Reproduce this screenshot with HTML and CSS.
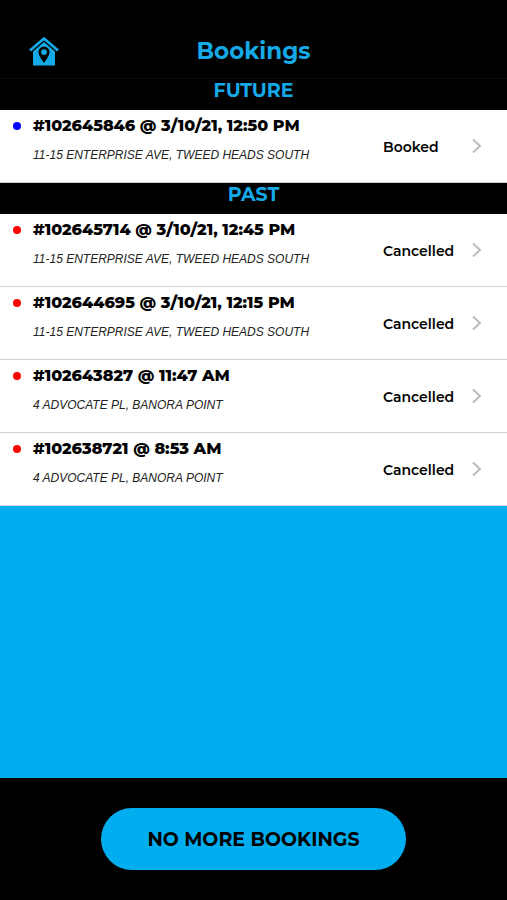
FILE: index.html
```html
<!DOCTYPE html>
<html lang="en">
<head>
<meta charset="utf-8">
<meta name="viewport" content="width=device-width, initial-scale=1">
<title>Bookings</title>
<link rel="stylesheet" href="styles.css">
</head>
<body>
<header class="top">
  <a class="home" href="#" aria-label="Home">
    <svg viewBox="0 0 30 30" width="30" height="30" aria-hidden="true">
      <path d="M4 15.500 15 6l11 9.500V29.500H4z" fill="#16a9e8"/>
      <path d="M1 14.500 15 2.500l14 12" fill="none" stroke="#16a9e8" stroke-width="2.800"/>
      <path fill="#000" fill-rule="evenodd" d="M15 10.500a5.600 5.600 0 0 0-5.600 5.600c0 4 5.600 10.900 5.600 10.900s5.600-6.900 5.600-10.900a5.600 5.600 0 0 0-5.600-5.600zm0 2.700a2.900 2.900 0 1 1 0 5.800 2.900 2.900 0 0 1 0-5.800z"/>
    </svg>
  </a>
  <h1 class="title">Bookings</h1>
</header>
<main class="content">
  <section>
    <h2 class="heading">FUTURE</h2>
    <ul class="list">
      <li><a class="row" href="#"><span class="dot booked"></span><span class="details"><strong class="ref">#102645846 @ 3/10/21, 12:50 PM</strong><em class="address">11-15 ENTERPRISE AVE, TWEED HEADS SOUTH</em></span><span class="status">Booked</span><svg class="chevron" viewBox="0 0 10 16" aria-hidden="true"><path d="m1 1.500 7 6.500-7 6.500"/></svg></a></li>
    </ul>
  </section>
  <section>
    <h2 class="heading">PAST</h2>
    <ul class="list">
      <li><a class="row" href="#"><span class="dot"></span><span class="details"><strong class="ref">#102645714 @ 3/10/21, 12:45 PM</strong><em class="address">11-15 ENTERPRISE AVE, TWEED HEADS SOUTH</em></span><span class="status">Cancelled</span><svg class="chevron" viewBox="0 0 10 16" aria-hidden="true"><path d="m1 1.500 7 6.500-7 6.500"/></svg></a></li>
      <li><a class="row" href="#"><span class="dot"></span><span class="details"><strong class="ref">#102644695 @ 3/10/21, 12:15 PM</strong><em class="address">11-15 ENTERPRISE AVE, TWEED HEADS SOUTH</em></span><span class="status">Cancelled</span><svg class="chevron" viewBox="0 0 10 16" aria-hidden="true"><path d="m1 1.500 7 6.500-7 6.500"/></svg></a></li>
      <li><a class="row" href="#"><span class="dot"></span><span class="details"><strong class="ref">#102643827 @ 11:47 AM</strong><em class="address">4 ADVOCATE PL, BANORA POINT</em></span><span class="status">Cancelled</span><svg class="chevron" viewBox="0 0 10 16" aria-hidden="true"><path d="m1 1.500 7 6.500-7 6.500"/></svg></a></li>
      <li><a class="row" href="#"><span class="dot"></span><span class="details"><strong class="ref">#102638721 @ 8:53 AM</strong><em class="address">4 ADVOCATE PL, BANORA POINT</em></span><span class="status">Cancelled</span><svg class="chevron" viewBox="0 0 10 16" aria-hidden="true"><path d="m1 1.500 7 6.500-7 6.500"/></svg></a></li>
    </ul>
  </section>
</main>
<footer class="bottom">
  <button class="more" type="button">NO MORE BOOKINGS</button>
</footer>
</body>
</html>
```
FILE: styles.css
```css
* {
  box-sizing: border-box;
}

body {
  display: flex;
  flex-direction: column;
  min-height: 100vh;
  margin: 0;
  background: #00aeef;
  color: #000;
  font-family: Montserrat, Inter, sans-serif;
}

.top {
  display: grid;
  grid-template-columns: 30px 1fr 30px;
  align-items: center;
  padding: 32px 29px 8px;
  border-bottom: 1px solid #0a0a0a;
  background: #000;
}

.home {
  display: block;
  height: 30px;
}

.title {
  margin: 0;
  color: #16a9e8;
  font-size: 23px;
  font-weight: 700;
  line-height: 38px;
  text-align: center;
}

.content {
  flex: 1;
}

.heading {
  margin: 0;
  padding-bottom: 7px;
  background: #000;
  color: #16a9e8;
  font-size: 19px;
  font-weight: 700;
  line-height: 24px;
  text-align: center;
}

.list {
  margin: 0;
  padding: 0;
  list-style: none;
}

.row {
  display: flex;
  align-items: center;
  min-height: 73px;
  padding: 0 25px 0 13px;
  border-bottom: 1px solid #d2d2d2;
  background: #fff;
  color: #000;
  text-decoration: none;
}

.dot {
  flex: none;
  align-self: flex-start;
  width: 8px;
  height: 8px;
  margin: 12px 12px 0 0;
  border-radius: 50%;
  background: #f00;
}

.booked {
  background: #00f;
}

.details {
  flex: 1;
  display: flex;
  flex-direction: column;
  gap: 8px;
  align-self: flex-start;
  padding-top: 4px;
}

.ref {
  font-size: 16px;
  font-weight: 800;
  line-height: 24px;
}

.address {
  color: #222;
  font-family: "Liberation Sans", sans-serif;
  font-size: 12px;
  line-height: 18px;
}

.status {
  width: 89px;
  padding-top: 2px;
  font-size: 14px;
  font-weight: 600;
  line-height: 20px;
}

.chevron {
  flex: none;
  width: 10px;
  height: 16px;
  fill: none;
  stroke: #bdbdbd;
  stroke-width: 2;
}

.bottom {
  display: grid;
  grid-template-columns: 1fr 3fr 1fr;
  padding: 30px 0;
  background: #000;
}

.more {
  grid-column: 2;
  height: 62px;
  border: 0;
  border-radius: 31px;
  background: #00aeef;
  color: #000;
  font-family: inherit;
  font-size: 19px;
  font-weight: 700;
}
```
